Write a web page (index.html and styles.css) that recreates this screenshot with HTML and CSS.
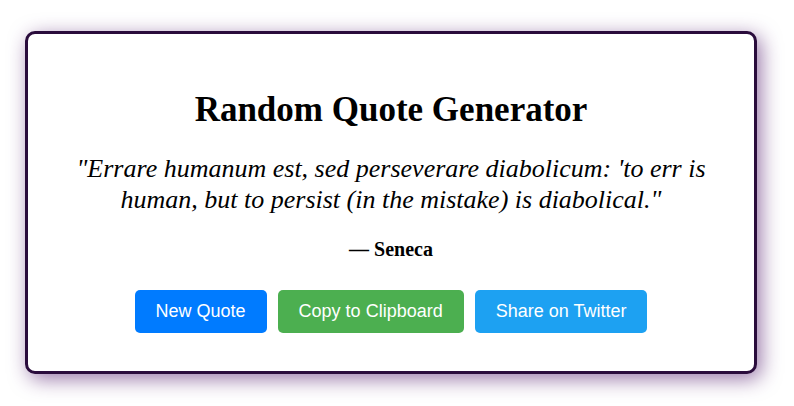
FILE: index.html
```html
<!DOCTYPE html>
<html lang="en">
<head>
<meta charset="utf-8">
<title>Random Quote Generator</title>
<link rel="stylesheet" href="styles.css">
</head>
<body>
  <main class="card">
    <h1 class="title">Random Quote Generator</h1>
    <p class="quote">"Errare humanum est, sed perseverare diabolicum: 'to err is human, but to persist (in the mistake) is diabolical."</p>
    <p class="author">— Seneca</p>
    <div class="actions">
      <button class="btn btn-new" type="button">New Quote</button>
      <button class="btn btn-copy" type="button">Copy to Clipboard</button>
      <button class="btn btn-tweet" type="button">Share on Twitter</button>
    </div>
  </main>
</body>
</html>
```
FILE: styles.css
```css
html, body {
  margin: 0;
  padding: 0;
  background: #ffffff;
}

body {
  box-sizing: border-box;
  min-height: 100vh;
  font-family: "Liberation Serif", "Times New Roman", serif;
  color: #000;
  padding-top: 31px;
  padding-bottom: 32px;
}

.card {
  box-sizing: border-box;
  width: 732px;
  margin-left: 25px;
  padding: 55px 40px 38px;
  background: #fff;
  border: 3px solid #2a0c3c;
  border-radius: 10px;
  box-shadow: 4px 5px 20px rgba(84, 28, 110, 0.6);
  text-align: center;
}

.title {
  margin: 0;
  font-size: 35px;
  line-height: 42px;
  font-weight: bold;
}

.quote {
  margin: 22px 0 0;
  font-size: 26px;
  line-height: 31px;
  font-style: italic;
}

.author {
  margin: 22px 0 0;
  font-size: 20px;
  line-height: 24px;
  font-weight: bold;
}

.actions {
  margin-top: 29px;
  display: flex;
  justify-content: center;
  gap: 11px;
}

.btn {
  font-family: "Liberation Sans", Arial, sans-serif;
  font-size: 18px;
  line-height: 21px;
  padding: 11px 21px;
  border: none;
  border-radius: 5px;
  color: #fff;
  cursor: pointer;
}

.btn-new { background: #007bff; }
.btn-copy { background: #4caf50; }
.btn-tweet { background: #1da1f2; }
```
